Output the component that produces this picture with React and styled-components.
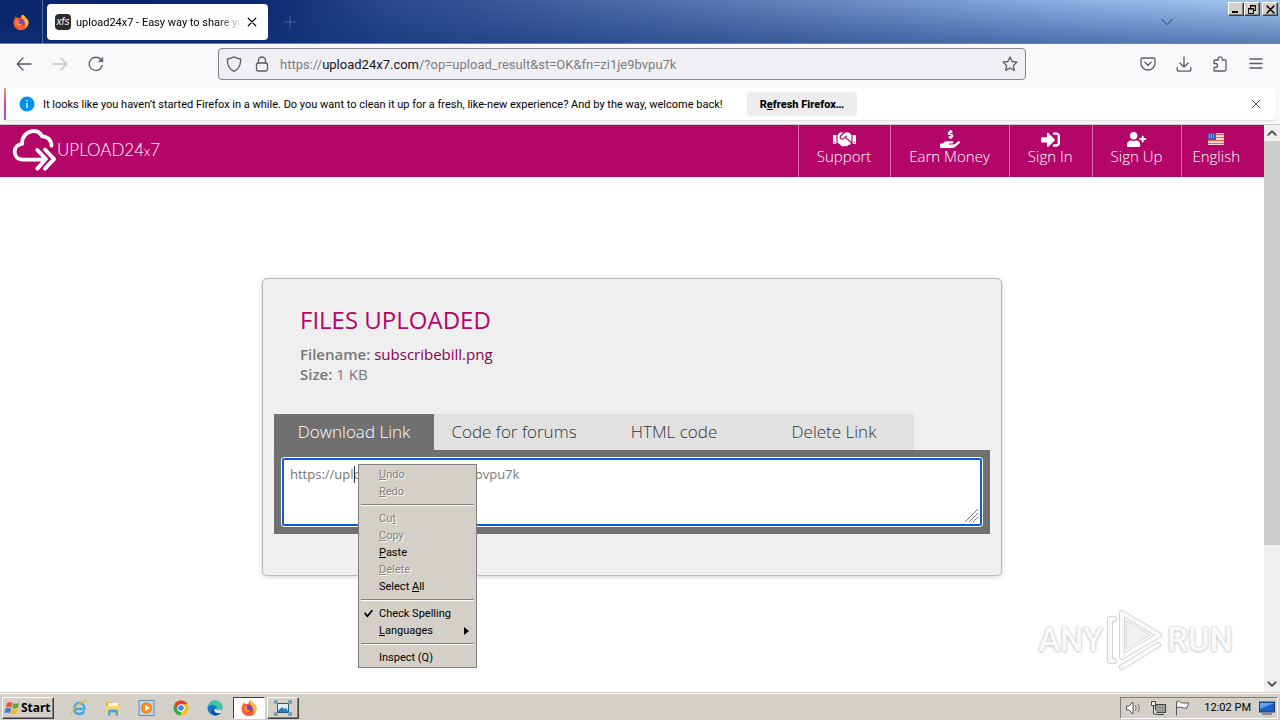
import React from "react";
import styled, { createGlobalStyle, css } from "styled-components";
import { FaHandshake, FaHandHoldingUsd, FaSignInAlt, FaUserPlus } from "react-icons/fa";

const uiFont = `Roboto, "DejaVu Sans", sans-serif`;
const siteFont = `"Open Sans", "Noto Sans", sans-serif`;

const GlobalStyle = createGlobalStyle`
  *, *::before, *::after { box-sizing: border-box; }
  body { margin: 0; background: #fff; }
  button, textarea, input { font: inherit; color: inherit; margin: 0; }
  button { padding: 0; border: 0; background: none; }
  svg { display: block; flex: none; }
`;

const Desktop = styled.div`
  min-height: 100vh;
  display: flex;
  flex-direction: column;
  font-family: ${uiFont};
  font-size: 11px;
  color: #15141a;
`;

/* Browser title bar */
const TitleBar = styled.header`
  display: flex;
  height: 44px;
  flex: none;
  background:
    linear-gradient(to bottom, rgba(15, 50, 120, 0) 0%, rgba(15, 50, 120, 0.5) 100%),
    linear-gradient(100deg, #0a246a 0%, #0b2873 20%, #29488c 30%, #6484ba 62%, #8fb5e6 85%, #a6caf0 100%);
  border-bottom: 1px solid #72809e;
`;
const BrandSlot = styled.div`
  width: 43px;
  display: flex;
  align-items: center;
  justify-content: center;
  border-right: 1px solid #5a6b9c;
`;
const BrowserTab = styled.div`
  width: 221px;
  height: 36px;
  margin: 4px 0 0 4px;
  padding: 0 11px 0 8px;
  display: flex;
  align-items: center;
  gap: 5px;
  border-radius: 4px;
  background: #fff;
  color: #000;
`;
const Favicon = styled.span`
  flex: none;
  width: 16px;
  height: 16px;
  border-radius: 4px;
  background: #2b2a2c;
  color: #fff;
  font: italic 10px/15px "Liberation Sans", sans-serif;
  text-align: center;
`;
const TabTitle = styled.span`
  flex: 1;
  overflow: hidden;
  white-space: nowrap;
  mask-image: linear-gradient(to right, #000 85%, transparent);
`;
const NewTab = styled.button`
  width: 44px;
  display: flex;
  align-items: center;
  justify-content: center;
  color: #53668f;
`;
const TitleEnd = styled.div`
  margin-left: auto;
  display: flex;
  align-items: flex-start;
`;
const TabListButton = styled.button`
  align-self: center;
  margin-right: 54px;
  color: #456397;
`;
const WindowButtons = styled.div`
  display: flex;
  padding: 2px 2px 0 0;
`;
const bevel = css`
  border: 1px solid;
  border-color: #fff #404040 #404040 #fff;
  box-shadow: inset -1px -1px #808080;
  background: #d4d0c8;
`;
const WindowButton = styled.button`
  ${bevel}
  width: 16px;
  height: 14px;
  display: flex;
  align-items: center;
  justify-content: center;
  color: #000;
  margin-left: ${(p) => (p.$apart ? "2px" : "0")};
`;

/* Browser toolbar */
const Toolbar = styled.div`
  height: 44px;
  flex: none;
  display: flex;
  align-items: center;
  padding: 0 16px 4px;
  background: #f9f9fb;
  color: #5b5b66;
`;
const NavButtons = styled.div`
  flex: 1;
  display: flex;
  gap: 20px;
`;
const ActionButtons = styled(NavButtons)`
  justify-content: flex-end;
`;
const IconButton = styled.button`
  width: 16px;
  height: 16px;
  color: ${(p) => (p.$faint ? "#c4c4ca" : "inherit")};
`;
const AddressBar = styled.label`
  flex: 0 1 808px;
  height: 32px;
  margin: 0 36px 0 0;
  padding: 0 7px;
  display: flex;
  align-items: center;
  gap: 12px;
  border: 1px solid #85858c;
  border-radius: 4px;
  background: #f0f0f4;
`;
const Address = styled.span`
  flex: 1;
  margin-left: -2px;
  font-size: 13px;
  color: #7c7c84;
  white-space: nowrap;
  overflow: hidden;
  b { font-weight: 400; color: #15141a; }
`;

/* Notification bar */
const NoticeTray = styled.div`
  flex: none;
  padding: 0 4px 4px;
  background: #f9f9fb;
  border-bottom: 1px solid #ccc;
`;
const Notice = styled.div`
  position: relative;
  height: 32px;
  display: flex;
  align-items: center;
  padding: 0 15px;
  gap: 8px;
  background: #fff;
  border-radius: 4px;
  box-shadow: 0 1px 2px rgba(58, 57, 68, 0.15);
  color: #000;
  white-space: nowrap;
  &::before {
    content: "";
    position: absolute;
    left: 0;
    top: 0;
    bottom: 0;
    width: 2px;
    background: linear-gradient(#ff9a5c, #e0409a 50%, #9059ff);
  }
`;
const RefreshButton = styled.button`
  height: 24px;
  margin-left: 16px;
  padding: 0 13px;
  border-radius: 4px;
  background: #ededf0;
  font-weight: 800;
`;
const CloseNotice = styled.button`
  margin-left: auto;
  color: #5b5b66;
`;

/* Web page */
const Viewport = styled.div`
  flex: 1;
  display: flex;
`;
const Site = styled.div`
  position: relative;
  flex: 1;
  min-width: 0;
  background: #fff;
  font-family: ${siteFont};
  font-size: 15px;
  color: #777;
`;
const SiteHeader = styled.header`
  display: flex;
  justify-content: space-between;
  height: 52px;
  background: #b40669;
  color: #fff;
`;
const Logo = styled.a`
  display: flex;
  align-items: center;
  padding: 0 0 2px 12px;
  color: #fff;
  text-decoration: none;
  font: 300 17px/24px Lato, sans-serif;
  small { font-size: 13px; }
`;
const SiteNav = styled.nav`
  display: flex;
`;
const NavLink = styled.a`
  display: flex;
  flex-direction: column;
  align-items: center;
  padding: 5px ${(p) => (p.$last ? "24px" : "19px")} 0 ${(p) => (p.$last ? "10px" : "18px")};
  border-left: 1px solid #dc6cab;
  color: #fff;
  font-size: 15px;
  font-weight: 300;
  line-height: 17px;
  text-decoration: none;
`;
const NavIcon = styled.span`
  height: 18px;
  display: flex;
  align-items: center;
  font-size: ${(p) => p.$size || 18}px;
`;
const Card = styled.main`
  width: min(740px, 96%);
  margin: 101px auto 0;
  padding: 24px 11px 41px;
  border: 1px solid #bbb;
  border-radius: 5px;
  background: #efefef;
  box-shadow: 0 1px 4px rgba(0, 0, 0, 0.18);
`;
const Info = styled.section`
  padding: 0 26px;
  line-height: 20px;
  p { margin: 0; }
  a { color: #870052; text-decoration: none; }
  b { font-weight: 600; }
`;
const Heading = styled.h2`
  margin: 0 0 7px;
  font-size: 24px;
  line-height: 34px;
  font-weight: 400;
  color: #b40669;
`;
const Tabs = styled.div`
  display: flex;
  margin-top: 30px;
`;
const TabButton = styled.button`
  flex: 0 1 160px;
  height: 36px;
  padding-bottom: 2px;
  background: ${(p) => (p.$active ? "#707070" : "#e1e1e1")};
  color: ${(p) => (p.$active ? "#fff" : "#333")};
  font-size: 17px;
  font-weight: 300;
`;
const Panel = styled.div`
  position: relative;
  padding: 8px;
  background: #707070;
`;
const LinkBox = styled.textarea`
  display: block;
  width: 100%;
  height: 68px;
  padding: 5px 6px;
  border: 2px solid #0a5fc8;
  border-radius: 2px;
  outline: 1px solid #fff;
  background: #fff;
  color: #777;
  font-size: 13px;
  line-height: 18px;
  resize: none;
`;
const Caret = styled.span`
  position: absolute;
  left: 80px;
  top: 16px;
  width: 1px;
  height: 17px;
  background: #333;
`;
const Grip = styled.svg`
  position: absolute;
  right: 12px;
  bottom: 12px;
`;

/* Context menu */
const Menu = styled.div`
  position: absolute;
  left: 84px;
  top: 14px;
  width: 119px;
  padding: 1px 2px;
  border: 1px solid #808080;
  background: #d4d0c8;
  color: #000;
  font: 11px/17px ${uiFont};
`;
const MenuItem = styled.button`
  display: grid;
  grid-template-columns: 18px 1fr 13px;
  align-items: center;
  width: 100%;
  height: 17px;
  text-align: left;
  white-space: nowrap;
  color: ${(p) => (p.disabled ? "#808080" : "#000")};
  text-shadow: ${(p) => (p.disabled ? "1px 1px #fff" : "none")};
  svg { margin-left: 3px; }
`;
const Divider = styled.hr`
  height: 2px;
  margin: 4px 0;
  border: 0;
  border-top: 1px solid #808080;
  border-bottom: 1px solid #fff;
`;

const Watermark = styled.div`
  position: absolute;
  right: 31px;
  bottom: 20px;
  display: flex;
  align-items: center;
  gap: 3px;
  color: #fafafa;
  font: 500 33px/64px Roboto, "Liberation Sans", sans-serif;
  text-shadow: 0 0 2px #bbb, 0 1px 3px #ccc;
`;

const Scrollbar = styled.div`
  width: 16px;
  flex: none;
  display: flex;
  flex-direction: column;
  background: #f0f0f0;
`;
const ScrollButton = styled.button`
  height: 16px;
  display: flex;
  align-items: center;
  justify-content: center;
  color: #505050;
`;
const ScrollThumb = styled.div`
  flex: 75.5;
  background: #cdcdcd;
`;
const ScrollRest = styled.div`
  flex: 24.5;
`;

/* Taskbar */
const Taskbar = styled.footer`
  height: 28px;
  flex: none;
  display: flex;
  align-items: center;
  padding: 2px 2px 0;
  border-top: 1px solid #d4d0c8;
  box-shadow: inset 0 1px #fff;
  background: #d4d0c8;
  color: #000;
`;
const StartButton = styled.button`
  ${bevel}
  width: 52px;
  height: 22px;
  display: flex;
  align-items: center;
  padding-left: 1px;
  font-weight: 700;
  font-size: 12px;
  font-family: "Noto Sans", sans-serif;
`;
const Launchers = styled.div`
  display: flex;
  align-items: center;
  gap: 2px;
  margin-left: 9px;
`;
const Launcher = styled.button`
  width: 32px;
  height: 22px;
  display: flex;
  align-items: center;
  justify-content: center;
  ${(p) => p.$state === "raised" && bevel}
  ${(p) =>
    p.$state === "pressed" &&
    css`
      border: 1px solid;
      border-color: #404040 #fff #fff #404040;
      background: #fff;
    `}
`;
const Tray = styled.div`
  margin-left: auto;
  height: 22px;
  display: flex;
  align-items: center;
  gap: 8px;
  padding: 0 2px 0 5px;
  border: 1px solid;
  border-color: #808080 #fff #fff #808080;
`;
const Clock = styled.time`
  margin: 0 0 0 6px;
`;

const Line = ({ size = 16, children, width = 1.3, ...rest }) => (
  <svg width={size} height={size} viewBox="0 0 16 16" fill="none" stroke="currentColor" strokeWidth={width} strokeLinecap="round" strokeLinejoin="round" {...rest}>
    {children}
  </svg>
);

const FirefoxIcon = ({ size = 16 }) => (
  <svg width={size} height={size} viewBox="0 0 16 16">
    <path d="M9.4.4c2.2 1.2 2.8 2.6 3.2 3.4 2 1.2 3 3.1 2.9 5A7.5 7.5 0 0 1 .5 8.600C.5 6.200 1.500 4.800 2.300 3.800l.2-1.600 1.500 1.600c1.400-.3 2.500 0 3.200.4C7.500 2.800 8.200 1.300 9.400.4z" fill="#ff5b36" />
    <path d="M9.4.4c2.2 1.2 2.800 2.600 3.200 3.400 2 1.200 3 3.100 2.900 5-.2 2.600-1.800 4.700-3.900 5.900 2-3 1.300-6.200-.6-7.700C9.600 5.600 8.300 3.200 9.400.4z" fill="#ffbd2f" />
    <circle cx="8" cy="8.600" r="3.600" fill="#7542d0" />
    <path d="M3.300 6.600c1.500-.8 2.800-.4 4 .4-1.500.3-1.800 1-1.500 1.700.6 1.600 2.700 1.500 4 .7-.7 2.300-2.700 3.200-4.500 2.500C3.300 11.100 2.600 8.800 3.300 6.600z" fill="#ff8b27" />
  </svg>
);
const CloseX = ({ size = 10, width = 1.2 }) => (
  <Line size={size} width={width * 1.6}><path d="M2 2l12 12M14 2L2 14" /></Line>
);
const Chevron = ({ up, size = 10, width = 3 }) => (
  <Line size={size} width={width}><path d={up ? "M2 11l6-6 6 6" : "M2 5l6 6 6-6"} /></Line>
);

const CloudLogo = () => (
  <svg width="45" height="42" viewBox="0 0 46 44" fill="none" stroke="#fff" strokeWidth="4" strokeLinecap="round" strokeLinejoin="round">
    <path d="M23 32H11C5 32 2.200 28 2.200 23.500S6 16 10 15.500C9.500 9 14 3.200 20.500 2.200c5-.7 8.500 1.800 10.500 5.500 6 .2 10 4.300 9.800 9.800" />
    <path d="M26 22l9 9.500-9 10M34 21.500l9.500 10L34 41.500M23 32h10" />
  </svg>
);
const Flag = () => (
  <svg width="16" height="12" viewBox="0 0 16 12">
    <rect width="16" height="12" fill="#fff" />
    <path d="M0 1.500h16M0 4.500h16M0 7.500h16M0 10.500h16" stroke="#e8604c" strokeWidth="1.400" />
    <rect width="8" height="7" fill="#3c5bb5" />
    <path d="M1 2h6M1 4h6" stroke="#cfdaf5" strokeWidth="1" strokeDasharray="1 1" />
  </svg>
);
const AnyRunMark = () => (
  <svg width="58" height="62" viewBox="0 0 58 62" fill="none" strokeLinejoin="round" strokeLinecap="round">
    {[["#d4d4d4", 6], ["#fafafa", 4]].map(([stroke, w]) => (
      <g key={stroke} stroke={stroke} strokeWidth={w}>
        <path d="M16 4v44l37-22z" />
        <path d="M8 10H4v42h4M16 58l36-22" />
      </g>
    ))}
    <path d="M20 12v28l24-14z" fill="#f1f1f1" stroke="#d8d8d8" />
  </svg>
);

const WindowsFlag = () => (
  <svg width="17" height="16" viewBox="0 0 17 16">
    <path d="M3 3c2-1.400 4-1.200 5.500-.2L7.300 7.500C5.500 6.500 3.800 6.500 1.800 7.600z" fill="#e8592b" />
    <path d="M9.300 3.200c2 1 4 .8 6-.4L14 7.600c-2 1.200-4 1.200-5.900.3z" fill="#6fa63a" />
    <path d="M1.600 8.500c2-1.200 3.700-1 5.500 0l-1.300 4.700c-1.800-1-3.500-.9-5.500.3z" fill="#3d7fd0" />
    <path d="M7.900 8.900c2 .9 3.900.9 5.900-.3l-1.300 4.700c-2 1.200-4 1.200-5.900.3z" fill="#f7b818" />
  </svg>
);
const ExplorerE = () => (
  <svg width="18" height="18" viewBox="0 0 18 18" fill="none">
    <path d="M4.500 10h9.800c.3-4-2-6-5-6S4.200 6.500 4.200 9.500s2 5.500 5.200 5.500c2.200 0 3.900-1 4.600-2.800" stroke="#3fa7e5" strokeWidth="2.400" />
    <path d="M2 16.500C0 14 5 7.500 9.500 4.500S17 1 16.500 4" stroke="#e8bf3b" strokeWidth="1.300" />
  </svg>
);
const FolderIcon = () => (
  <svg width="18" height="18" viewBox="0 0 18 18">
    <path d="M2 3h5l1 1.500h7V15H2z" fill="#d9b450" />
    <path d="M4 4h10v4H4z" fill="#fff6cc" />
    <path d="M2 7h14v8H2z" fill="#f3d878" />
    <path d="M4 16.500v-4q0-2 2-2h6q2 0 2 2v4h-2.500v-3h-5v3z" fill="#4fa3d8" />
  </svg>
);
const PlayerIcon = () => (
  <svg width="18" height="18" viewBox="0 0 18 18">
    <rect x="1" y="1.500" width="15" height="15" fill="#b9d8ef" stroke="#5f91b8" />
    <circle cx="8.500" cy="9" r="5.800" fill="#f68b1f" />
    <path d="M7 5.800v6.400L12 9z" fill="#fff" />
  </svg>
);
const ChromeIcon = () => (
  <svg width="16" height="16" viewBox="0 0 16 16">
    <circle cx="8" cy="8" r="7.500" fill="#fbc116" />
    <path d="M1.500 4.250A7.500 7.500 0 0 1 14.500 4.250H8L4.750 9.900z" fill="#e33b2e" />
    <path d="M1.500 4.250L4.750 9.900Q6 11.800 8 11.800L7.500 15.500A7.500 7.500 0 0 1 1.500 4.250z" fill="#2da94f" />
    <circle cx="8" cy="8" r="3.700" fill="#fff" />
    <circle cx="8" cy="8" r="2.800" fill="#4285f4" />
  </svg>
);
const EdgeIcon = () => (
  <svg width="16" height="16" viewBox="0 0 16 16">
    <circle cx="8" cy="8" r="7.500" fill="#1479cf" />
    <path d="M.6 7C1.500 2.500 5 .5 8 .5c4.500 0 7.500 3 7.500 6 0 2.500-2 3.700-4 3.700-2.500 0-2.200-1.200-1.700-1.800C10 5 4 3 .6 7z" fill="#3fc6a4" />
    <path d="M6.300 7.300c-1.500 3 .5 6.500 4.700 6.400 1.500 0 2.500-.6 3.300-1.200 0 0-2.300 3-6 3C4 15 3.500 9.500 6.300 7.300z" fill="#0f4a94" />
    <path d="M9.800 8.400c-.5.600-.8 1.800 1.700 1.800 1.500 0 2.800-.5 3.400-1.500l-.6 3.800c-3.500 1.500-7.300 0-6.700-3.200z" fill="#e4eef5" />
  </svg>
);
const CaptureIcon = () => (
  <svg width="18" height="16" viewBox="0 0 18 16">
    <path d="M1 4V1h3M14 1h3v3M17 12v3h-3M4 15H1v-3" fill="none" stroke="#3d7fa8" strokeWidth="1.200" />
    <path d="M1 1l3 3M17 1l-3 3M17 15l-3-3M1 15l3-3" stroke="#3d7fa8" />
    <rect x="3.500" y="3.500" width="11" height="9" fill="#dbeefa" stroke="#2b5f80" />
    <path d="M4 11l4-4 2 2 2-1 2 3v1H4z" fill="#327aad" />
  </svg>
);

const menuEntries = [
  { key: "U", rest: "ndo", disabled: true },
  { key: "R", rest: "edo", disabled: true },
  null,
  { pre: "Cu", key: "t", disabled: true },
  { key: "C", rest: "opy", disabled: true },
  { key: "P", rest: "aste" },
  { key: "D", rest: "elete", disabled: true },
  { pre: "Select ", key: "A", rest: "ll" },
  null,
  { pre: "Check Spelling", checked: true },
  { key: "L", rest: "anguages", submenu: true },
  null,
  { pre: "Inspect (Q)" },
];

const navLinks = [
  { label: "Support", icon: <FaHandshake />, size: 23 },
  { label: "Earn Money", icon: <FaHandHoldingUsd />, size: 20 },
  { label: "Sign In", icon: <FaSignInAlt />, size: 19 },
  { label: "Sign Up", icon: <FaUserPlus />, size: 19 },
  { label: "English", icon: <Flag />, last: true },
];

const tabNames = ["Download Link", "Code for forums", "HTML code", "Delete Link"];

function ContextMenu() {
  return (
    <Menu role="menu">
      {menuEntries.map((e, i) =>
        e === null ? (
          <Divider key={i} />
        ) : (
          <MenuItem key={i} role="menuitem" disabled={e.disabled}>
            <span>{e.checked && <Line size={9} width={3.200}><path d="M2 8l4 5 8-10" /></Line>}</span>
            <span>{e.pre}{e.key && <u>{e.key}</u>}{e.rest}</span>
            {e.submenu && (
              <svg width="5" height="8" viewBox="0 0 5 8"><path d="M0 0l5 4-5 4z" fill="#000" /></svg>
            )}
          </MenuItem>
        )
      )}
    </Menu>
  );
}

export default function App() {
  return (
    <>
      <GlobalStyle />
      <Desktop>
        <TitleBar>
          <BrandSlot><FirefoxIcon /></BrandSlot>
          <BrowserTab>
            <Favicon>xfs</Favicon>
            <TabTitle>upload24x7 - Easy way to share your files</TabTitle>
            <button aria-label="Close tab"><CloseX size={10} /></button>
          </BrowserTab>
          <NewTab aria-label="New tab"><Line size={12}><path d="M8 1v14M1 8h14" /></Line></NewTab>
          <TitleEnd>
            <TabListButton aria-label="List all tabs"><Chevron size={14} width={1.600} /></TabListButton>
            <WindowButtons>
              <WindowButton aria-label="Minimize">
                <svg width="10" height="8"><path d="M1 6h6v2H1z" /></svg>
              </WindowButton>
              <WindowButton aria-label="Restore">
                <svg width="10" height="9" fill="none" stroke="#000"><path d="M3.500 3V.5h5v5H7M3 1h6" /><path d="M1.500 3.500h5v5h-5zM1 4h6" /></svg>
              </WindowButton>
              <WindowButton aria-label="Close" $apart><CloseX size={9} width={1.700} /></WindowButton>
            </WindowButtons>
          </TitleEnd>
        </TitleBar>

        <Toolbar>
          <NavButtons>
            <IconButton aria-label="Back"><Line><path d="M15 8H1.500M7 2L1.200 8 7 14" /></Line></IconButton>
            <IconButton aria-label="Forward" $faint><Line><path d="M1 8h13.500M9 2l5.800 6L9 14" /></Line></IconButton>
            <IconButton aria-label="Reload"><Line><path d="M14.200 9.500A6.600 6.600 0 1 1 12.800 3.500L14.500 5.300" /><path d="M14.800 1.500v4.300h-4.300z" fill="currentColor" strokeWidth=".5" /></Line></IconButton>
          </NavButtons>
          <AddressBar>
            <Line><path d="M8 .8c2 1.600 4.500 2 6.600 2.200C14.800 9 12.500 13.500 8 15.300 3.500 13.500 1.200 9 1.400 3 3.500 2.800 6 2.400 8 .8z" /></Line>
            <Line><rect x="2.500" y="7" width="11" height="8" rx="1.500" /><path d="M4.500 7V4.500a3.500 3.500 0 0 1 7 0V7" /></Line>
            <Address>https://<b>upload24x7.com</b>/?op=upload_result&amp;st=OK&amp;fn=zi1je9bvpu7k</Address>
            <Line><path d="M8 1l2.100 4.500 4.900.6-3.600 3.400.9 4.900L8 12l-4.300 2.400.9-4.900L1 6.100l4.900-.6z" /></Line>
          </AddressBar>
          <ActionButtons>
            <IconButton aria-label="Save to Pocket"><Line><path d="M2.500 2h11A1.500 1.500 0 0 1 15 3.500V7A7 7 0 0 1 1 7V3.500A1.500 1.500 0 0 1 2.500 2zM4.800 6.200L8 9.300l3.200-3.100" /></Line></IconButton>
            <IconButton aria-label="Downloads"><Line><path d="M8 .8v10M3.800 7L8 11l4.200-4M1.200 11.500v1.700a2 2 0 0 0 2 2h9.600a2 2 0 0 0 2-2v-1.700" /></Line></IconButton>
            <IconButton aria-label="Extensions"><Line><path d="M2 15h10.500a1.500 1.500 0 0 0 1.500-1.500V5a1 1 0 0 0-1-1h-2.800V2.800a2 2 0 0 0-4 0V4H3a1 1 0 0 0-1 1v2.500h1.500a2 2 0 0 1 0 4H2z" /></Line></IconButton>
            <IconButton aria-label="Menu"><Line><path d="M2 3h12M2 7.500h12M2 12h12" /></Line></IconButton>
          </ActionButtons>
        </Toolbar>

        <NoticeTray>
          <Notice>
            <svg width="16" height="16" viewBox="0 0 16 16"><circle cx="8" cy="8" r="7.500" fill="#0090ed" /><path d="M8 7v5M8 4v1.500" stroke="#fff" strokeWidth="1.300" /></svg>
            <span>It looks like you haven’t started Firefox in a while. Do you want to clean it up for a fresh, like-new experience? And by the way, welcome back!</span>
            <RefreshButton>R<u>e</u>fresh Firefox…</RefreshButton>
            <CloseNotice aria-label="Dismiss"><CloseX size={10} width={1} /></CloseNotice>
          </Notice>
        </NoticeTray>

        <Viewport>
          <Site>
            <SiteHeader>
              <Logo href="#"><CloudLogo /><span>UPLOAD24<small>x</small>7</span></Logo>
              <SiteNav>
                {navLinks.map((n) => (
                  <NavLink key={n.label} href="#" $last={n.last}>
                    <NavIcon $size={n.size}>{n.icon}</NavIcon>
                    {n.label}
                  </NavLink>
                ))}
              </SiteNav>
            </SiteHeader>
            <Card>
              <Info>
                <Heading>FILES UPLOADED</Heading>
                <p><b>Filename:</b> <a href="#">subscribebill.png</a></p>
                <p><b>Size:</b> 1 KB</p>
              </Info>
              <Tabs role="tablist">
                {tabNames.map((t, i) => (
                  <TabButton key={t} role="tab" aria-selected={i === 0} $active={i === 0}>{t}</TabButton>
                ))}
              </Tabs>
              <Panel>
                <LinkBox aria-label="Download Link" spellCheck={false} defaultValue="https://upload24x7.com/zi1je9bvpu7k" />
                <Caret />
                <Grip width="13" height="13" stroke="#777"><path d="M0 13L13 0M4 13l9-9M8 13l5-5" /></Grip>
                <ContextMenu />
              </Panel>
            </Card>
            <Watermark><span>ANY</span><AnyRunMark /><span>RUN</span></Watermark>
          </Site>
          <Scrollbar>
            <ScrollButton aria-label="Scroll up"><Chevron up /></ScrollButton>
            <ScrollThumb />
            <ScrollRest />
            <ScrollButton aria-label="Scroll down"><Chevron /></ScrollButton>
          </Scrollbar>
        </Viewport>

        <Taskbar>
          <StartButton><WindowsFlag />Start</StartButton>
          <Launchers>
            <Launcher aria-label="Internet Explorer"><ExplorerE /></Launcher>
            <Launcher aria-label="File Explorer"><FolderIcon /></Launcher>
            <Launcher aria-label="Media Player"><PlayerIcon /></Launcher>
            <Launcher aria-label="Chrome"><ChromeIcon /></Launcher>
            <Launcher aria-label="Edge"><EdgeIcon /></Launcher>
            <Launcher aria-label="Firefox" $state="pressed"><FirefoxIcon /></Launcher>
            <Launcher aria-label="Screen capture" $state="raised"><CaptureIcon /></Launcher>
          </Launchers>
          <Tray>
            <Line width={1}><path d="M1 6h2l4-4v12L3 10H1z" fill="#fff" stroke="#555" /><path d="M9.500 5.500q2 2.500 0 5M12 4q3 4 0 8" stroke="#777" /></Line>
            <svg width="16" height="16" viewBox="0 0 16 16" fill="#eee" stroke="#444"><rect x="5.500" y="4.500" width="10" height="8" fill="#999" /><path d="M7 14.500h7M1.500 1.500h4v4h-4zM3.500 6v8H7" /></svg>
            <Line width={1}><path d="M2.500 15V1.500C5 .5 6.500 2 8 3h6.500L13 8q-3 .500-5-.500-3-1-5.500 0" fill="#fff" stroke="#555" /></Line>
            <Clock>12:02 PM</Clock>
            <svg width="16" height="14" viewBox="0 0 16 14"><rect x=".5" y="1" width="15" height="10" fill="#1d5fc0" stroke="#163d7a" /><path d="M1 2h14L1 8z" fill="#5da2ee" /><path d="M3 13h10" stroke="#444" /></svg>
          </Tray>
        </Taskbar>
      </Desktop>
    </>
  );
}
